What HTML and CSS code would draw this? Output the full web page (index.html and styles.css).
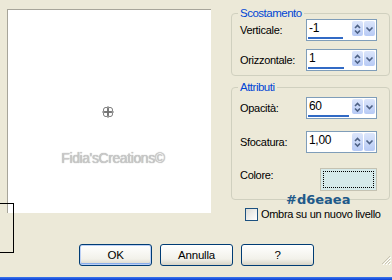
FILE: index.html
```html
<!DOCTYPE html>
<html lang="it">
<head>
    <meta charset="UTF-8">
    <meta name="viewport" content="width=device-width, initial-scale=1.0">
    <title>Sfalsamento ombra</title>
    <link rel="stylesheet" href="styles.css">
</head>
<body>
    <div class="dialog">
        <div class="top">
            <div class="preview">
                <svg class="target" width="14" height="14" viewBox="0 0 14 14">
                    <circle cx="5" cy="5" r="2.6"/>
                    <circle cx="9" cy="5" r="2.6"/>
                    <circle cx="5" cy="9" r="2.6"/>
                    <circle cx="9" cy="9" r="2.6"/>
                    <path d="M7 1v12M1 7h12"/>
                </svg>
                <div class="mark">Fidia'sCreations©</div>
            </div>

            <div class="side">
                <fieldset class="group">
                    <legend>Scostamento</legend>
                    <div class="row">
                        <label>Verticale:</label>
                        <div class="spin">
                            <div class="spin-top">
                                <span class="val">-1</span>
                                <span class="btn"><svg width="11" height="14" viewBox="0 0 11 14"><path d="M3 6l2.5-2.5L8 6M3 8.5L5.5 11 8 8.5"/></svg></span>
                                <span class="btn"><svg width="11" height="14" viewBox="0 0 11 14"><path d="M2.5 5.5l3 3 3-3"/></svg></span>
                            </div>
                            <div class="bar" style="width:35px"></div>
                        </div>
                    </div>
                    <div class="row">
                        <label>Orizzontale:</label>
                        <div class="spin">
                            <div class="spin-top">
                                <span class="val">1</span>
                                <span class="btn"><svg width="11" height="14" viewBox="0 0 11 14"><path d="M3 6l2.5-2.5L8 6M3 8.5L5.5 11 8 8.5"/></svg></span>
                                <span class="btn"><svg width="11" height="14" viewBox="0 0 11 14"><path d="M2.5 5.5l3 3 3-3"/></svg></span>
                            </div>
                            <div class="bar" style="width:36px"></div>
                        </div>
                    </div>
                </fieldset>

                <fieldset class="group group-2">
                    <legend>Attributi</legend>
                    <div class="row">
                        <label>Opacità:</label>
                        <div class="spin">
                            <div class="spin-top">
                                <span class="val">60</span>
                                <span class="btn"><svg width="11" height="14" viewBox="0 0 11 14"><path d="M3 6l2.5-2.5L8 6M3 8.5L5.5 11 8 8.5"/></svg></span>
                                <span class="btn"><svg width="11" height="14" viewBox="0 0 11 14"><path d="M2.5 5.5l3 3 3-3"/></svg></span>
                            </div>
                            <div class="bar" style="width:41px"></div>
                        </div>
                    </div>
                    <div class="row row-sf">
                        <label>Sfocatura:</label>
                        <div class="spin">
                            <div class="spin-top">
                                <span class="val">1,00</span>
                                <span class="btn"><svg width="11" height="16" viewBox="0 0 11 16"><path d="M3 7l2.5-2.5L8 7M3 9.5L5.5 12 8 9.5"/></svg></span>
                                <span class="btn"><svg width="11" height="16" viewBox="0 0 11 16"><path d="M2.5 6.5l3 3 3-3"/></svg></span>
                            </div>
                        </div>
                    </div>
                    <div class="row row-col">
                        <label>Colore:</label>
                        <div class="swatch"><div class="swatch-in"></div></div>
                    </div>
                </fieldset>

                <div class="hex">#d6eaea</div>

                <div class="check">
                    <span class="box"></span>
                    <span>Ombra su un nuovo livello</span>
                </div>
            </div>
        </div>

        <div class="buttons">
            <button class="default">OK</button>
            <button>Annulla</button>
            <button>?</button>
            <svg class="grip" width="10" height="10" viewBox="0 0 10 10">
                <path d="M9 1L1 9M9 4L4 9M9 7L7 9" stroke="#c8c5b4"/>
                <path d="M10 2L2 10M10 5L5 10M10 8L8 10" stroke="#fff"/>
            </svg>
        </div>

        <div class="frame"></div>
    </div>

    <div class="outline"></div>
</body>
</html>
```

FILE: styles.css
```css
body { margin: 0; width: 392px; height: 280px; overflow: hidden; position: relative; background: #ece9d8; font-family: "Liberation Sans", Arial, sans-serif; font-size: 11px; letter-spacing: -0.3px; color: #000; }
.dialog { display: flex; flex-direction: column; height: 280px; }
.top { display: flex; align-items: flex-start; padding-left: 7px; }

.preview { box-sizing: border-box; width: 204px; height: 204px; margin-top: 9px; background: #fff; border-top: 1px solid #a7a59a; border-left: 1px solid #a7a59a; display: flex; flex-direction: column; align-items: center; padding-top: 95px; padding-left: 1px; }
.target { fill: none; stroke: #6e6e6e; stroke-width: 0.9; margin-left: -4px; }
.mark { margin-top: 31px; font-size: 14px; line-height: 16px; letter-spacing: -0.4px; color: #c9c9c9; text-shadow: 0 0 1px #989898; margin-left: 6px; }

.side { position: relative; width: 159px; margin-left: 20px; margin-top: 7px; }
.group { box-sizing: border-box; width: 159px; margin: 0; padding: 0 12px 4px 8px; border: 1px solid #d0d0bf; border-radius: 4px; min-width: 0; }
.group legend { color: #0046d5; padding: 0 2px; margin-left: -2px; line-height: 12px; font-size: 11.5px; letter-spacing: -0.5px; }
.group-2 { margin-top: 5px; padding-top: 4px; padding-bottom: 8px; }
.row { display: flex; align-items: center; justify-content: space-between; height: 22px; }
.row + .row { margin-top: 8px; }
.row-sf { margin-top: 12px !important; }
.row-col { margin-top: 15px !important; height: 23px; align-items: flex-start; }
.row-col label { margin-top: 1px; }

.spin { box-sizing: border-box; width: 71px; height: 22px; border: 1px solid #7f9db9; background: #fff; display: flex; flex-direction: column; padding: 0 1px 1px 1px; }
.spin-top { flex: 1; display: flex; gap: 1px; padding-top: 1px; }
.val { flex: 1; font-size: 12px; line-height: 15px; padding-left: 1px; }
.btn { width: 11px; border-radius: 2px; background: linear-gradient(#dce6fb, #b7caf5); display: flex; align-items: center; justify-content: center; }
.btn svg { fill: none; stroke: #4d6185; stroke-width: 1.6; }
.bar { height: 3px; background: #316ac5; margin-top: 1px; }

.swatch { box-sizing: border-box; width: 57px; height: 23px; border: 1px solid #c5c2b2; background: #d6eaea; padding: 2px; }
.swatch-in { height: 100%; box-sizing: border-box; border: 1px dotted #000; }

.hex { position: absolute; left: 55px; top: 185px; font-family: "DejaVu Sans", sans-serif; font-weight: bold; font-size: 13px; line-height: 15px; letter-spacing: 0; color: #1f5a8a; }

.check { display: flex; align-items: center; gap: 3px; margin-top: 8px; margin-left: 14px; line-height: 13px; white-space: nowrap; }
.box { box-sizing: border-box; width: 13px; height: 13px; border: 1px solid #1c5180; background: linear-gradient(135deg, #dcdcd7, #fff); }

.buttons { display: flex; align-items: flex-end; gap: 8px; padding-left: 79px; margin-top: auto; }
button { box-sizing: border-box; width: 73px; height: 22px; border: 1px solid #003c74; border-radius: 3px; background: linear-gradient(#fff, #f2f1ea 70%, #d8d4c6); font-family: inherit; font-size: 11.5px; letter-spacing: -0.2px; color: #000; padding: 0; }
button.default { box-shadow: inset 0 0 0 1px #bcd0f5, inset 0 -1px 0 1px #89adeb; }
.grip { margin-left: auto; margin-right: 1px; margin-bottom: 1px; }
.frame { height: 3px; margin-top: 11px; background: linear-gradient(#3d78ee, #0a3fd2); }

.outline { position: absolute; left: -1px; top: 203px; width: 15px; height: 50px; box-sizing: border-box; border: 1px solid #000; }
```
